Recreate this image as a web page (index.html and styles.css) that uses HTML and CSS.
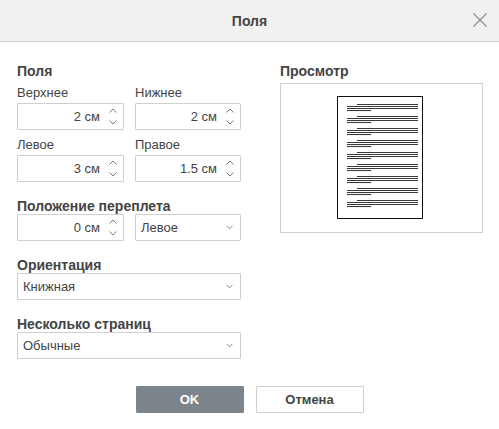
FILE: index.html
```html
<!DOCTYPE html>
<html lang="ru">
<head>
    <meta charset="UTF-8">
    <meta name="viewport" content="width=device-width, initial-scale=1.0">
    <title>Поля</title>
    <link rel="stylesheet" href="styles.css">
</head>
<body>
    <div class="dialog">
        <!-- Заголовок окна -->
        <div class="dialog-header">
            <span class="dialog-title">Поля</span>
            <button class="close-btn" title="Закрыть">
                <svg width="16" height="16" viewBox="0 0 16 16"><path d="M1.5 1.5 L14.5 14.5 M14.5 1.5 L1.5 14.5" stroke="#8a8a8a" stroke-width="1.2" fill="none"/></svg>
            </button>
        </div>

        <div class="dialog-body">
            <div class="col-left">
                <div class="section-title">Поля</div>
                <div class="field-grid">
                    <div class="field">
                        <label class="field-label">Верхнее</label>
                        <div class="spin"><span class="spin-value">2 см</span><span class="spin-arrows"></span></div>
                    </div>
                    <div class="field">
                        <label class="field-label">Нижнее</label>
                        <div class="spin"><span class="spin-value">2 см</span><span class="spin-arrows"></span></div>
                    </div>
                    <div class="field">
                        <label class="field-label">Левое</label>
                        <div class="spin"><span class="spin-value">3 см</span><span class="spin-arrows"></span></div>
                    </div>
                    <div class="field">
                        <label class="field-label">Правое</label>
                        <div class="spin"><span class="spin-value">1.5 см</span><span class="spin-arrows"></span></div>
                    </div>
                </div>

                <div class="group">
                    <div class="section-title">Положение переплета</div>
                    <div class="field-grid">
                        <div class="spin"><span class="spin-value">0 см</span><span class="spin-arrows"></span></div>
                        <div class="select"><span>Левое</span><span class="select-arrow"></span></div>
                    </div>
                </div>

                <div class="group">
                    <div class="section-title">Ориентация</div>
                    <div class="select"><span>Книжная</span><span class="select-arrow"></span></div>
                </div>

                <div class="group">
                    <div class="section-title">Несколько страниц</div>
                    <div class="select"><span>Обычные</span><span class="select-arrow"></span></div>
                </div>
            </div>

            <div class="col-right">
                <div class="section-title">Просмотр</div>
                <div class="preview">
                    <div class="page">
                        <svg id="page-lines" width="84" height="121" viewBox="0 0 84 121"></svg>
                    </div>
                </div>
            </div>
        </div>

        <div class="dialog-footer">
            <button class="btn btn-primary">OK</button>
            <button class="btn">Отмена</button>
        </div>
    </div>

    <script>
        // Стрелки для полей со счётчиком
        var up = '<svg width="8" height="5" viewBox="0 0 8 5"><path d="M0.5 4.5 L4 1 L7.5 4.5" stroke="#7a7a7a" fill="none"/></svg>';
        var down = '<svg width="8" height="5" viewBox="0 0 8 5"><path d="M0.5 0.5 L4 4 L7.5 0.5" stroke="#7a7a7a" fill="none"/></svg>';
        document.querySelectorAll('.spin-arrows').forEach(function (el) {
            el.innerHTML = up + down;
        });
        document.querySelectorAll('.select-arrow').forEach(function (el) {
            el.innerHTML = down;
        });

        // Строки текста на миниатюре страницы
        var svg = document.getElementById('page-lines');
        var html = '';
        for (var i = 0; i < 9; i++) {
            var y = 7.5 + i * 12;
            html += '<line x1="19" x2="80" y1="' + y + '" y2="' + y + '"/>';
            html += '<line x1="9" x2="80" y1="' + (y + 2) + '" y2="' + (y + 2) + '"/>';
            html += '<line x1="9" x2="80" y1="' + (y + 4) + '" y2="' + (y + 4) + '"/>';
            html += '<line x1="9" x2="33" y1="' + (y + 6) + '" y2="' + (y + 6) + '"/>';
        }
        svg.innerHTML = '<g stroke="#3a3a3a" stroke-width="1.1">' + html + '</g>';
    </script>
</body>
</html>
```

FILE: styles.css
```css
* {
    box-sizing: border-box;
}
body {
    margin: 0;
    font-family: 'Liberation Sans', Arial, sans-serif;
    font-size: 13px;
    color: #444;
    background-color: #fff;
}
.dialog {
    width: 499px;
    height: 429px;
    background-color: #fff;
}
.dialog-header {
    height: 42px;
    background-color: #f1f1f1;
    border-bottom: 1px solid #cbcbcb;
    display: flex;
    align-items: center;
    justify-content: center;
    position: relative;
}
.dialog-title {
    font-size: 14px;
    font-weight: bold;
    color: #444;
    margin-top: 1px;
}
.close-btn {
    position: absolute;
    right: 11px;
    top: 12px;
    width: 16px;
    height: 16px;
    padding: 0;
    border: none;
    background: none;
    display: flex;
}
.dialog-body {
    display: flex;
    padding: 21px 16px 0 17px;
    gap: 39px;
}
.col-left {
    width: 224px;
}
.col-right {
    width: 203px;
}
.section-title {
    font-size: 14px;
    font-weight: bold;
    line-height: 16px;
    color: #444;
}
.field-grid {
    display: grid;
    grid-template-columns: 107px 106px;
    column-gap: 11px;
    row-gap: 7px;
}
.col-left > .field-grid {
    margin-top: 6px;
}
.field-label {
    display: block;
    line-height: 16px;
    margin-bottom: 2px;
    color: #444;
}
.group {
    margin-top: 16px;
}
.spin,
.select {
    height: 27px;
    border: 1px solid #cfcfcf;
    border-radius: 1px;
    display: flex;
    align-items: center;
    background-color: #fff;
}
.spin-value {
    flex: 1;
    text-align: right;
    padding-right: 5px;
}
.spin-arrows {
    width: 16px;
    display: flex;
    flex-direction: column;
    align-items: center;
    gap: 7px;
    margin-right: 2px;
}
.spin-arrows svg {
    display: block;
}
.select {
    justify-content: space-between;
    padding: 0 7px 0 5px;
}
.select-arrow svg {
    display: block;
    width: 7px;
}
.preview {
    margin-top: 4px;
    height: 150px;
    border: 1px solid #cfcfcf;
    display: flex;
    justify-content: center;
    align-items: flex-start;
    padding-top: 12px;
    padding-right: 3px;
}
.page {
    width: 86px;
    height: 123px;
    border: 1px solid #111;
    background-color: #fff;
}
.page svg {
    display: block;
}
.dialog-footer {
    display: flex;
    justify-content: center;
    gap: 12px;
    padding-top: 27px;
}
.btn {
    width: 108px;
    height: 27px;
    font-family: 'Liberation Sans', Arial, sans-serif;
    font-size: 13px;
    font-weight: bold;
    color: #444;
    background-color: #fff;
    border: 1px solid #cfcfcf;
    border-radius: 1px;
    cursor: pointer;
}
.btn-primary {
    background-color: #7d858c;
    border-color: #7d858c;
    color: #fff;
}
```
